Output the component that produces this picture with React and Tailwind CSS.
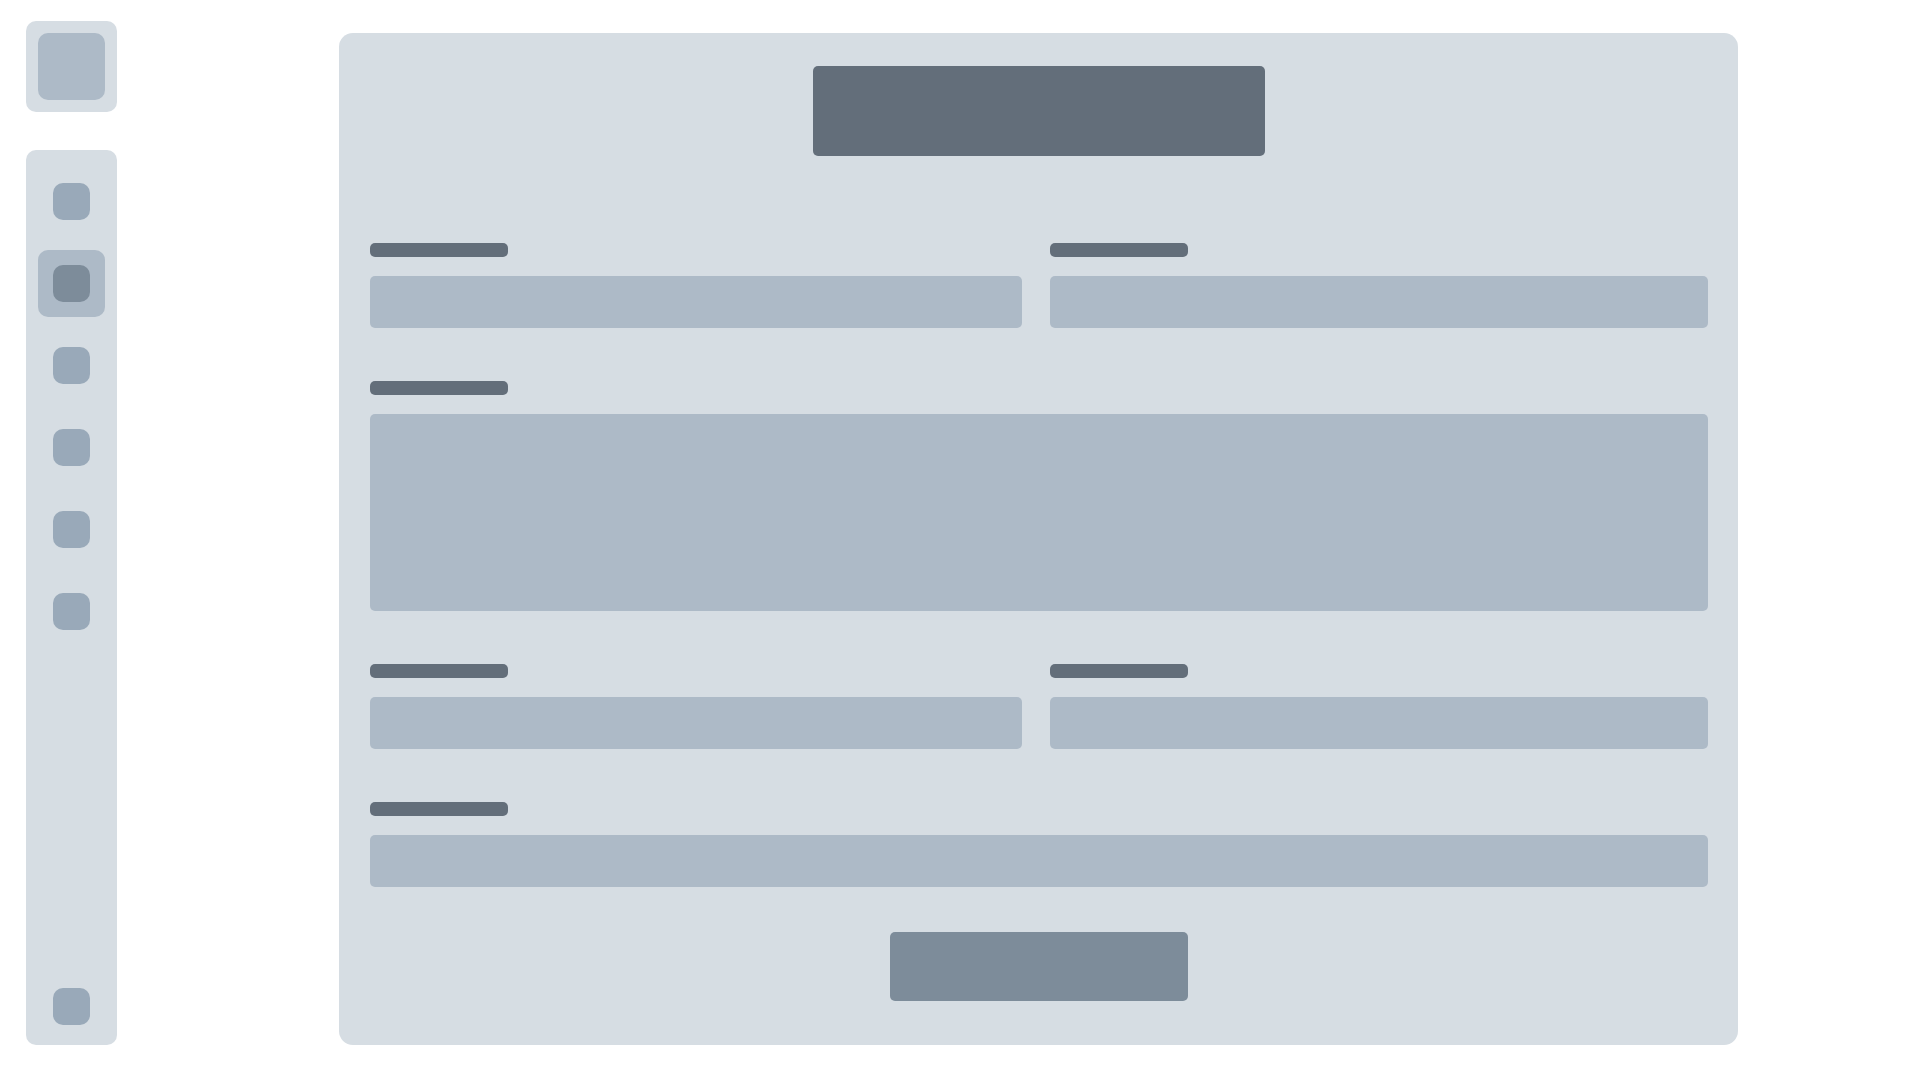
const navItems = [
  { id: "home", label: "Home" },
  { id: "form", label: "Form", active: true },
  { id: "messages", label: "Messages" },
  { id: "calendar", label: "Calendar" },
  { id: "files", label: "Files" },
  { id: "reports", label: "Reports" },
];

function NavButton({ label, active = false }) {
  return (
    <button
      type="button"
      aria-label={label}
      aria-current={active ? "page" : undefined}
      className={
        active
          ? "grid size-[67px] place-items-center rounded-[10px] bg-[#adbac7]"
          : "grid size-[67px] place-items-center rounded-[10px]"
      }
    >
      <span
        className={
          active
            ? "size-[37px] rounded-[10px] bg-[#7d8c9a]"
            : "size-[37px] rounded-[10px] bg-[#99a9b9]"
        }
      />
    </button>
  );
}

function Field({ id, label, multiline = false, wide = false }) {
  return (
    <div className={wide ? "flex flex-col gap-[19px] lg:col-span-2" : "flex flex-col gap-[19px]"}>
      <label htmlFor={id} className="block h-3.5 w-[138px] rounded-[5px] bg-[#636e7a]" />
      {multiline ? (
        <textarea
          id={id}
          aria-label={label}
          className="block h-[197px] w-full resize-none rounded-[5px] bg-[#adbac7] p-3 outline-none"
        />
      ) : (
        <input
          id={id}
          type="text"
          aria-label={label}
          className="block h-[52px] w-full rounded-[5px] bg-[#adbac7] px-3 outline-none"
        />
      )}
    </div>
  );
}

export default function App() {
  return (
    <div className="flex min-h-screen bg-white px-[26px] pt-[21px] pb-[35px] font-['Inter',sans-serif]">
      <aside className="flex shrink-0 flex-col gap-[38px]">
        <a href="#home" aria-label="Logo" className="block rounded-[10px] bg-[#d6dde3] p-3">
          <span className="block size-[67px] rounded-[10px] bg-[#adbac7]" />
        </a>
        <nav className="flex grow flex-col gap-[15px] rounded-[10px] bg-[#d6dde3] px-3 pt-[18px] pb-[5px]">
          {navItems.map((item) => (
            <NavButton key={item.id} label={item.label} active={item.active} />
          ))}
          <div className="mt-auto">
            <NavButton label="Settings" />
          </div>
        </nav>
      </aside>

      <main className="mt-3 ml-6 min-w-0 grow rounded-[14px] bg-[#d6dde3] pt-[33px] pr-[30px] pb-11 pl-[31px] xl:mr-[156px] xl:ml-[222px]">
        <form className="flex flex-col items-center">
          <h1
            aria-label="Form title"
            className="h-[90px] w-full max-w-[452px] rounded-[5px] bg-[#636e7a]"
          />
          <div className="mt-[87px] grid w-full grid-cols-1 gap-x-7 gap-y-[53px] lg:grid-cols-[652fr_658fr]">
            <Field id="first-name" label="First name" />
            <Field id="last-name" label="Last name" />
            <Field id="description" label="Description" multiline wide />
            <Field id="email" label="Email" />
            <Field id="phone" label="Phone" />
            <Field id="address" label="Address" wide />
          </div>
          <button
            type="submit"
            aria-label="Submit"
            className="mt-[45px] h-[69px] w-full max-w-[298px] rounded-[5px] bg-[#7d8c9a]"
          />
        </form>
      </main>
    </div>
  );
}
